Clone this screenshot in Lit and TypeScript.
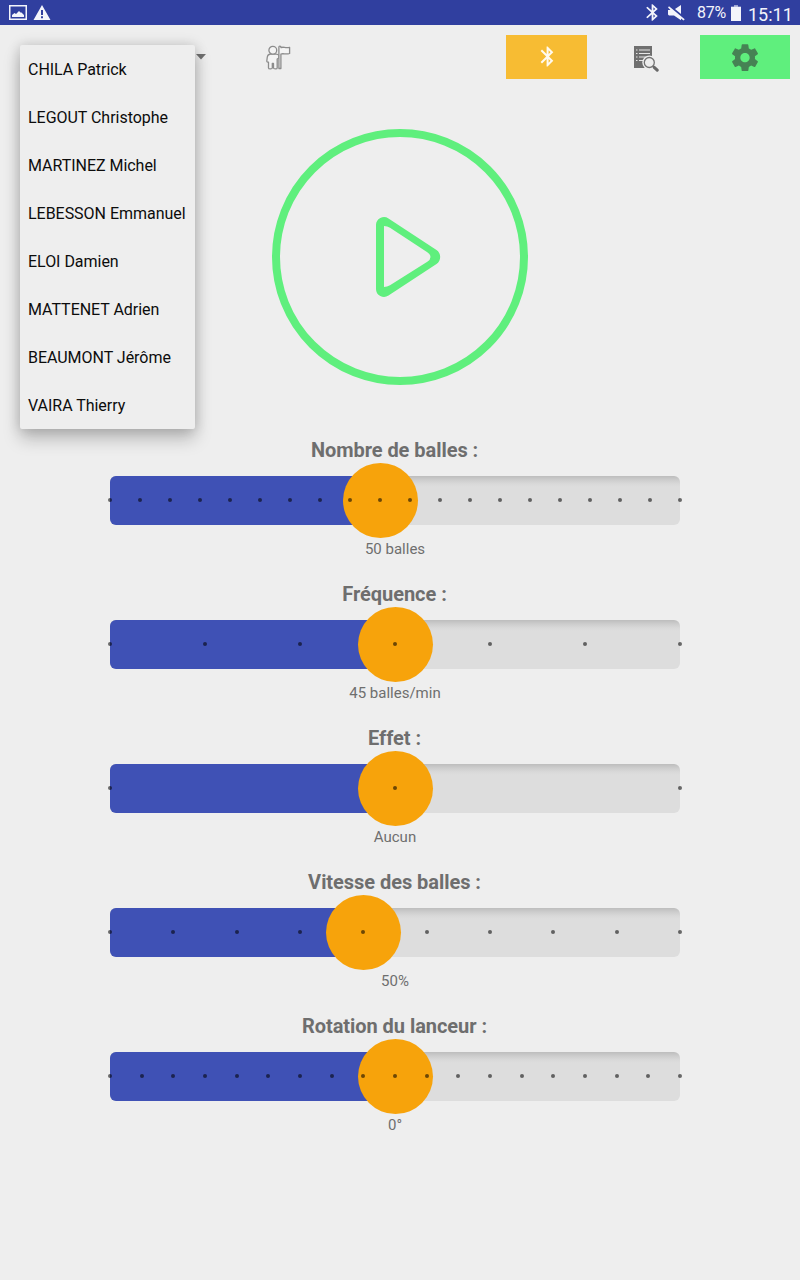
import { LitElement, html, css, svg } from "lit";
import { customElement, property } from "lit/decorators.js";

const BLUETOOTH =
  "M17.71 7.71L12 2h-1v7.59L6.41 5 5 6.41 10.59 12 5 17.59 6.41 19 11 14.41V22h1l5.71-5.71-4.3-4.29 4.3-4.29zM13 5.83l1.88 1.88L13 9.59V5.83zm1.88 10.46L13 18.17v-3.76l1.88 1.88z";
const GEAR =
  "M19.43 12.98c.04-.32.07-.64.07-.98s-.03-.66-.07-.98l2.11-1.65c.19-.15.24-.42.12-.64l-2-3.46c-.12-.22-.39-.3-.61-.22l-2.49 1c-.52-.4-1.08-.73-1.69-.98l-.38-2.65C14.46 2.18 14.25 2 14 2h-4c-.25 0-.46.18-.49.42l-.38 2.65c-.61.25-1.17.59-1.69.98l-2.49-1c-.23-.09-.49 0-.61.22l-2 3.46c-.13.22-.07.49.12.64l2.11 1.65c-.04.32-.07.65-.07.98s.03.66.07.98l-2.11 1.65c-.19.15-.24.42-.12.64l2 3.46c.12.22.39.3.61.22l2.49-1c.52.4 1.08.73 1.69.98l.38 2.65c.03.24.24.42.49.42h4c.25 0 .46-.18.49-.42l.38-2.65c.61-.25 1.17-.59 1.69-.98l2.49 1c.23.09.49 0 .61-.22l2-3.46c.12-.22.07-.49-.12-.64l-2.11-1.65zM12 15.5c-1.93 0-3.5-1.57-3.5-3.5s1.57-3.5 3.5-3.5 3.5 1.57 3.5 3.5-1.57 3.5-3.5 3.5z";

@customElement("status-bar")
class StatusBar extends LitElement {
  static styles = css`
    :host {
      display: flex;
      align-items: center;
      height: 25px;
      box-sizing: border-box;
      padding: 0 8px 0 9px;
      background: #303f9f;
      color: #f3f4fb;
      font-family: Roboto, sans-serif;
    }
    svg { display: block; fill: #f3f4fb; }
    .left { display: flex; gap: 6px; flex: 1; }
    .right { display: flex; align-items: center; }
    .bt { margin-right: 10px; }
    .mute { margin-right: 12px; }
    .pct { font-size: 16px; line-height: 25px; width: 31px; margin-right: 3px; white-space: nowrap; letter-spacing: -0.2px; }
    .battery { margin-right: 7px; }
    .clock { font-size: 18px; line-height: 25px; padding-top: 2px; height: 23px; width: 44px; white-space: nowrap; }
  `;
  render() {
    return html`
      <div class="left">
        <svg width="18" height="15" viewBox="0 0 18 15">
          <path fill-rule="evenodd" d="M0 0h18v15H0zM1.5 1.5v12h15v-12z" />
          <path d="M3 12V10l2.5-2 1.5 1 3-3 1.5 1.5h1l2.5 2.5V12z" />
        </svg>
        <svg width="18" height="15" viewBox="0 0 18 15">
          <path fill-rule="evenodd" d="M9 0l8.5 15H.5zM8 5v5h2V5zM8 11.2v2h2v-2z" />
        </svg>
      </div>
      <div class="right">
        <svg class="bt" width="12" height="17" viewBox="4.8 1.8 13.2 20.4" preserveAspectRatio="none">
          <path d=${BLUETOOTH} />
        </svg>
        <svg class="mute" width="17" height="16" viewBox="0 0 17 16">
          <path d="M7 4L13 0v9z" />
          <path d="M1 1.300L16.700 14.200 15.600 15.500 13 13.600V15.200L6 10.500H1L0 9.500V5h2.500L0 2.500z" />
        </svg>
        <span class="pct">87%</span>
        <svg class="battery" width="10" height="16" viewBox="0 0 10 16">
          <path d="M3 0h4v2H3z" fill="#9da4d3" /><path d="M0 1.700h10V16H0z" />
        </svg>
        <span class="clock">15:11</span>
      </div>
    `;
  }
}

@customElement("setting-slider")
class SettingSlider extends LitElement {
  @property() label = "";
  @property() value = "";
  @property({ type: Number }) steps = 2;
  @property({ type: Number }) index = 0;

  static styles = css`
    :host {
      display: block;
      height: 144px;
      width: 570px;
      text-align: center;
      color: #6e6e6e;
      font-family: Roboto, sans-serif;
    }
    .label { margin: 0 1px 0 0; font-size: 20px; font-weight: 700; line-height: 24px; height: 38px; letter-spacing: -0.05px; }
    .track {
      position: relative;
      height: 49px;
      border-radius: 6px;
      background: linear-gradient(#bdbdbd 0, #cdcdcd 4px, #d9d9d9 8px, #dddddd 11px);
    }
    .fill { height: 49px; background: #3f51b5; border-radius: 6px 0 0 6px; }
    .thumb {
      position: absolute;
      top: -13px;
      width: 75px;
      height: 75px;
      margin-left: -37px;
      border-radius: 50%;
      background: #f7a30b;
    }
    .dots {
      position: absolute;
      inset: 22px -2px auto -2px;
      display: flex;
      justify-content: space-between;
    }
    .dot { width: 4px; height: 4px; border-radius: 50%; background: rgba(0, 0, 0, 0.56); }
    .value { margin-top: 14px; font-size: 15px; line-height: 20px; }
  `;
  render() {
    const at = `${(this.index / (this.steps - 1)) * 100}%`;
    return html`
      <h2 class="label">${this.label}</h2>
      <div class="track">
        <div class="fill" style="width:${at}"></div>
        <div class="thumb" style="left:${at}"></div>
        <div class="dots">${Array.from({ length: this.steps }, () => html`<span class="dot"></span>`)}</div>
      </div>
      <div class="value">${this.value}</div>
    `;
  }
}

const PLAYERS = [
  "CHILA Patrick",
  "LEGOUT Christophe",
  "MARTINEZ Michel",
  "LEBESSON Emmanuel",
  "ELOI Damien",
  "MATTENET Adrien",
  "BEAUMONT Jérôme",
  "VAIRA Thierry",
];

const SETTINGS = [
  { label: "Nombre de balles :", value: "50 balles", steps: 20, index: 9 },
  { label: "Fréquence :", value: "45 balles/min", steps: 7, index: 3 },
  { label: "Effet :", value: "Aucun", steps: 3, index: 1 },
  { label: "Vitesse des balles :", value: "50%", steps: 10, index: 4 },
  { label: "Rotation du lanceur :", value: "0°", steps: 19, index: 9 },
];

const personFlag = svg`
  <g fill="#f4f4f4" stroke="#8c8c8c" stroke-width="1.3" stroke-linejoin="round">
    <path d="M4.500 9C2.500 9.300 1.600 10.300 1.300 12L.8 16c0 1 .9 1.300 1.700 1.200V23c0 1.200 3.700 1.200 3.800 0V18.500h1.200V23c.1 1.200 3.700 1.200 3.700 0V14l1.700-1V10L10 9z" />
    <circle cx="6.800" cy="5.300" r="3.900" />
    <path d="M12.900 2c0-1.200 2-1.200 2 0v.6c2.500-1.200 4.300.7 8.700-.3v6.200c-4 1.300-6-.4-8.700.5v14.500h-2z" />
  </g>`;

@customElement("app-root")
class AppRoot extends LitElement {
  static styles = css`
    :host {
      display: block;
      position: relative;
      height: 1280px;
      background: #eeeeee;
      font-family: Roboto, sans-serif;
      overflow: hidden;
    }
    svg { display: block; }
    .toolbar { display: flex; height: 44px; padding: 10px 10px 0 20px; }
    .spinner { width: 186px; display: flex; justify-content: flex-end; padding-top: 19px; box-sizing: border-box; }
    .plain { display: flex; justify-content: center; align-items: center; }
    .coach { width: 145px; }
    .gap { flex: 1; }
    .bluetooth { width: 81px; background: #f7bc33; }
    .report { width: 113px; box-sizing: border-box; padding: 3px 0 0 6px; }
    .settings { width: 90px; background: #5fef7d; }
    .play { display: flex; justify-content: center; padding-top: 50px; }
    .sliders { display: flex; flex-direction: column; padding: 53px 0 0 110px; }
    .menu {
      position: absolute;
      left: 20px;
      top: 45px;
      width: 175px;
      margin: 0;
      padding: 0;
      list-style: none;
      background: #eeeeee;
      border-radius: 2px;
      box-shadow: 0 10px 17px rgba(0, 0, 0, 0.22), 0 0 13px rgba(0, 0, 0, 0.17);
    }
    .item {
      height: 48px;
      line-height: 49px;
      padding-left: 8px;
      font-size: 16px;
      color: #0c0c0c;
      white-space: nowrap;
      letter-spacing: -0.03px;
    }
  `;
  render() {
    return html`
      <status-bar></status-bar>
      <div class="toolbar">
        <div class="spinner">
          <svg width="10" height="6" viewBox="0 0 10 6"><path d="M0 0h10L5 5.500z" fill="#707070" /></svg>
        </div>
        <div class="plain coach">
          <svg width="25" height="25" viewBox="0 0 25 25">${personFlag}</svg>
        </div>
        <div class="gap"></div>
        <div class="plain bluetooth">
          <svg width="24" height="24" viewBox="-.6 .5 24 24"><path d=${BLUETOOTH} fill="#fffaf0" /></svg>
        </div>
        <div class="plain report">
          <svg width="25" height="27" viewBox="0 0 25 27">
            <path d="M0 1h18v22H0z" fill="#6f6f6f" />
            <path d="M2 5h1.500M5 5h11M2 8.500h1.500M5 8.500h11M2 12h1.500M5 12h7M2 15.500h1.500M5 15.500h4" stroke="#e6e6e6" stroke-width="1.100" />
            <path d="M19 21.500l4.300 4" stroke="#eee" stroke-width="5.500" />
            <circle cx="15.300" cy="17.500" r="7" fill="#eee" />
            <circle cx="15.300" cy="17.500" r="5" fill="#eee" stroke="#737373" stroke-width="1.300" />
            <path d="M18.900 21.200l1.300 1.200" stroke="#737373" stroke-width="1.500" />
            <path d="M20.200 22.300l3 2.900" stroke="#686868" stroke-width="3" stroke-linecap="round" />
          </svg>
        </div>
        <div class="plain settings">
          <svg width="32" height="32" viewBox="0 -.5 24 24"><path d=${GEAR} fill="#468354" /></svg>
        </div>
      </div>
      <div class="play">
        <svg width="256" height="256" viewBox="0 0 256 256" fill="#5fef7d">
          <circle cx="128" cy="128" r="124" fill="none" stroke="#5fef7d" stroke-width="8" />
          <path fill-rule="evenodd"
            d="M104 96a8 8 0 0 1 12.500-6.600L164.500 121a8.500 8.500 0 0 1 0 14L116.500 166.600a8 8 0 0 1-12.500-6.600zM112 97v61q3 0 6-1.700L155.300 132.700q3.200-2 3.200-4.700t-3.200-4.700L118 98.700q-2.600-1.700-6-1.700z" />
        </svg>
      </div>
      <div class="sliders">
        ${SETTINGS.map(
          (s) => html`<setting-slider .label=${s.label} .value=${s.value} .steps=${s.steps} .index=${s.index}></setting-slider>`
        )}
      </div>
      <ul class="menu">
        ${PLAYERS.map((name) => html`<li class="item">${name}</li>`)}
      </ul>
    `;
  }
}
